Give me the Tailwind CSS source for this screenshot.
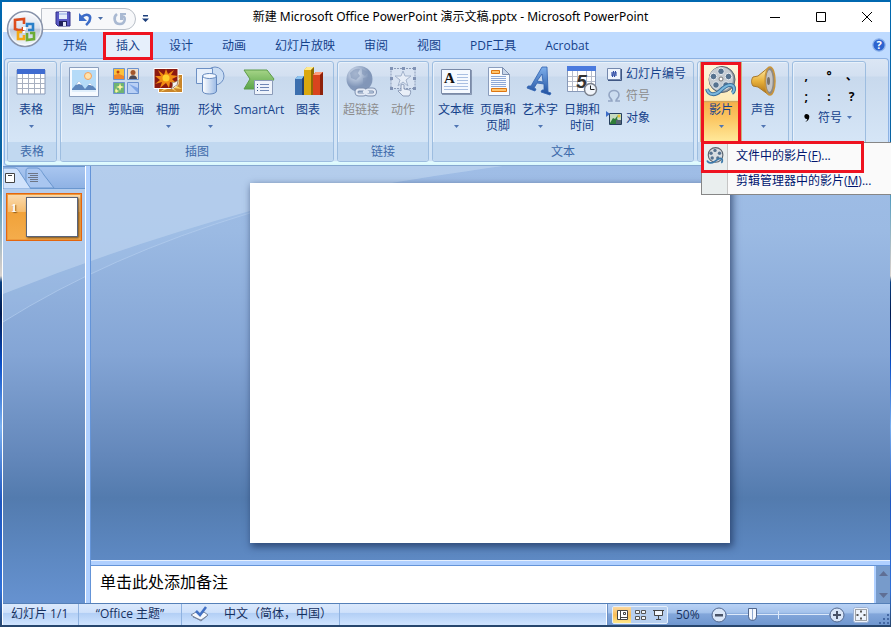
<!DOCTYPE html>
<html lang="zh-CN">
<head>
  <meta charset="UTF-8" />
  <meta name="viewport" content="width=device-width, initial-scale=1.0" />
  <title>新建 Microsoft Office PowerPoint 演示文稿.pptx - Microsoft PowerPoint</title>
  <script src="https://cdn.jsdelivr.net/npm/@tailwindcss/browser@4"></script>
</head>
<body class="h-screen overflow-hidden bg-[linear-gradient(180deg,#0068b0_0%,#0b62a0_26%,#5c9fc0_32%,#c9c9c9_42%,#d8d4d0_44%,#0a3f80_45%,#001a50_50%,#0a4fc8_58%,#7ab0f0_68%,#1e56c0_80%,#2f70d8_94%,#27456b_100%)] pt-[2px] pl-[2px] pr-px pb-[2px] font-['Open_Sans','Noto_Sans_CJK_SC',sans-serif] text-xs leading-4 text-[#15428b]">
  <div class="relative flex h-full flex-col border-l border-white bg-[#bfdbff]">

    <!-- Title bar -->
    <header class="flex h-[30px] shrink-0 items-center bg-white text-black">
      <div class="flex w-[146px] shrink-0 items-center pt-1 pl-[38px]">
        <div class="flex h-[22px] w-[96px] items-center gap-1 rounded-r-full border border-[#b9bfc8] bg-[#f7f8fa] pl-[13px]">
          <button class="mr-[2px]" aria-label="保存"><svg class="size-4" viewBox="0 0 16 16"><path d="M1 1h14v14H3l-2-2z" fill="#5a59c4" stroke="#30308a"/><path d="M4 1h8v7H4z" fill="#e4ecfa"/><path d="M4 2h8v2H4z" fill="#b9c9ee"/><path d="M4 10h8v5H4z" fill="#20205c"/><path d="M8 11h3v4H8z" fill="#dfe6f8"/></svg></button>
          <button aria-label="撤消"><svg class="size-4" viewBox="0 0 16 16"><path d="M5 6c4-4 9-2 8 2 0 3-2 4-4 6" fill="none" stroke="#3c6cc8" stroke-width="2.600"/><path d="M2 2v8h8z" fill="#3c6cc8"/></svg></button>
          <svg class="h-1 w-[7px]" viewBox="0 0 7 4"><path d="M1 0h5L3.500 3z" fill="#4a6ea8"/></svg>
          <button class="ml-1" aria-label="恢复"><svg class="size-4" viewBox="0 0 16 16"><path d="M5 3c-4 3-3 10 3 10 5 0 6-6 3-8" fill="none" stroke="#a9b9d2" stroke-width="2.600"/><path d="M8 2h6v2h-3v5H8z" fill="#a9b9d2"/></svg></button>
        </div>
        <button class="ml-[6px]" aria-label="自定义快速访问工具栏"><svg class="h-2 w-[7px]" viewBox="0 0 7 8"><path d="M1 0h5v1.500H1zM0 3.500h7L3.500 7z" fill="#1c3f7c"/></svg></button>
      </div>
      <h1 class="flex-1 truncate text-center font-['Noto_Sans','Noto_Sans_CJK_SC',sans-serif]">新建 Microsoft Office PowerPoint 演示文稿.pptx - Microsoft PowerPoint</h1>
      <button class="flex w-[46px] justify-center" aria-label="最小化"><svg class="size-3" viewBox="0 0 12 12" stroke="#000"><path d="M1 6.500h10"/></svg></button>
      <button class="flex w-[46px] justify-center" aria-label="最大化"><svg class="size-3" viewBox="0 0 12 12" stroke="#000" fill="none"><path d="M1.500 1.500h9v9h-9z"/></svg></button>
      <button class="flex w-[46px] justify-center" aria-label="关闭"><svg class="size-3" viewBox="0 0 12 12" stroke="#000" fill="none"><path d="M1 1l10 10M11 1L1 11"/></svg></button>
    </header>

    <!-- Office button, hangs over title bar and tabs -->
    <button class="absolute top-2 left-[3px]" aria-label="Office 按钮">
      <svg class="size-[38px]" viewBox="0 0 38 38">
        <defs><linearGradient id="orb" x2="0" y2="1"><stop stop-color="#fbfcfe"/><stop offset=".48" stop-color="#dbe0ec"/><stop offset=".5" stop-color="#bdc6d8"/><stop offset="1" stop-color="#f4fbff"/></linearGradient></defs>
        <circle cx="19" cy="19" r="17.500" fill="url(#orb)" stroke="#8994ab" stroke-width="1.500"/>
        <circle cx="19" cy="19" r="16" fill="none" stroke="#fff" stroke-opacity=".7"/>
        <g fill="none" stroke-width="2.600">
          <path d="M18 14v-5l-9 1v9l3 1h5v-3" stroke="#dc4b1c"/>
          <path d="M21 17v-3h6v6h-5" stroke="#2b7fc9"/>
          <path d="M16 22h-4v7h6v-4" stroke="#f3a712"/>
          <path d="M21 23v7l7-1v-6h-4" stroke="#6dac35"/>
        </g>
        <path d="M17 17h3v3h-3zM17 21h2v2h-2z" fill="#fff"/>
      </svg>
    </button>

    <!-- Tabs -->
    <nav class="flex h-[26px] shrink-0 gap-px pl-[46px]">
      <button class="px-[14px] pt-[2px]">开始</button>
      <button class="relative z-20 mx-px h-[28px] self-start border-3 border-[#ee1320] bg-[#e6effb] px-[10px]">插入</button>
      <button class="px-[14px] pt-[2px]">设计</button>
      <button class="px-[14px] pt-[2px]">动画</button>
      <button class="px-[14px] pt-[2px]">幻灯片放映</button>
      <button class="px-[14px] pt-[2px]">审阅</button>
      <button class="px-[14px] pt-[2px]">视图</button>
      <button class="px-[14px] pt-[2px]">PDF工具</button>
      <button class="px-[14px] pt-[2px]">Acrobat</button>
      <button class="ml-auto pr-1" aria-label="帮助"><svg class="size-[14px]" viewBox="0 0 14 14"><circle cx="7" cy="7" r="6.200" fill="#2c63cf" stroke="#8fb4ea" stroke-width="1.200"/><text x="7" y="11" text-anchor="middle" font-size="11" font-weight="700" fill="#fff">?</text></svg></button>
    </nav>

    <!-- Ribbon -->
    <section class="relative z-10 mx-px flex shrink-0 gap-[3px] rounded-[4px] border border-[#8db2e3] border-b-[#86a8d0] bg-[linear-gradient(180deg,#dbe6f4_0%,#d3e0f1_16%,#c8d9ed_17%,#d5e5f6_76%,#cfe2f6_96%,#e3fdff_97%,#d8f6fc_100%)] px-[2px] pt-[2px] pb-[3px]">

      <div class="rounded-[3px] border border-[#9dbde0] shadow-[inset_1px_1px_0_#e8f1fb]">
        <div class="flex h-[80px] pr-1 pl-[2px]">
          <button class="flex w-[42px] flex-col items-center pt-1">
            <svg class="size-8" viewBox="0 0 32 32"><path d="M2 4h28v24H2z" fill="#fff" stroke="#8899b8"/><path d="M2 3h28v5H2z" fill="#3f6bd0"/><path d="M2 12.500h28M2 17.500h28M2 22.500h28M7.500 8v20M13.500 8v20M19.500 8v20M25.500 8v20" stroke="#a8b0c0"/></svg>
            <span class="mt-1">表格</span>
            <svg class="mt-[7px] h-1 w-[7px]" viewBox="0 0 7 4"><path d="M1 0h5L3.500 3z" fill="#4f75b3"/></svg>
          </button>
        </div>
        <div class="h-[19px] rounded-b-[2px] bg-[#c1d8f0] text-center leading-[19px] text-[#3e6aaa]">表格</div>
      </div>

      <div class="rounded-[3px] border border-[#9dbde0] shadow-[inset_1px_1px_0_#e8f1fb]">
        <div class="flex h-[80px] pr-1 pl-[2px]">
          <button class="flex w-[42px] flex-col items-center pt-1">
            <svg class="size-8" viewBox="0 0 32 32"><path d="M1.500 1.500h29v29h-29z" fill="#f6faff" stroke="#8b9fbe"/><path d="M4 4h24v22H4z" fill="#b5dbf8"/><circle cx="20" cy="10" r="3.500" fill="#ffe2ad" stroke="#f5a15a"/><path d="M4 23l7-8 6 8 5-6 6 6v3H4z" fill="#5e87bd"/><path d="M8 19l3-4 3 4-3-1zM20 19l2-2 3 3-3-1z" fill="#fff"/><path d="M4 24h24v2H4z" fill="#dfeefb"/></svg>
            <span class="mt-1">图片</span>
          </button>
          <button class="flex w-[42px] flex-col items-center pt-1">
            <svg class="size-8" viewBox="0 0 32 32"><path d="M3.500 2.500h11v11h-11z" fill="#fbc13b" stroke="#6d93cf"/><path d="M4 9l5-1 5 2v3H4z" fill="#f0862b"/><circle cx="8" cy="6" r="1.500" fill="#c2410c"/><path d="M17.500 2.500h11v11h-11z" fill="#f0e0cc" stroke="#6d93cf"/><circle cx="23" cy="6.500" r="2.500" fill="#a4572c"/><path d="M19 13c0-5 8-5 8 0z" fill="#4c4a56"/><path d="M3.500 16.500h11v11h-11z" fill="#6fb472" stroke="#6d93cf"/><path d="M10 17l1 3 3 1-3 1-1 3-1-3-3-1 3-1zM6 22l1 2 2 1-2 1-1 1-1-2z" fill="#fff5a0"/><path d="M17.500 16.500h11v11h-11z" fill="#b9d0f5" stroke="#6d93cf"/><path d="M19 18l9 9V22z" fill="#7fa5e6"/></svg>
            <span class="mt-1">剪贴画</span>
          </button>
          <button class="flex w-[42px] flex-col items-center pt-1">
            <svg class="size-8" viewBox="0 0 32 32"><path d="M6.500 8.500h24v18h-24z" fill="#c9852a" stroke="#fff"/><path d="M8 26l10-8-8-1 9-1 10-5-6 8 7 4-9-1 4 4-7-4z" fill="#fbd56a"/><path d="M2 2.500h24v16l-5 4H2z" fill="#8c1a10" stroke="#fff"/><path d="M14 3l2 5 6-4-3 5 7 1-6 3 5 5-7-2-1 6-3-5-6 5 2-6-7 2 5-4-5-4 6 0-3-6 6 5z" fill="#f18b12"/><circle cx="14" cy="12" r="3.500" fill="#ffd12c"/><path d="M26 14l-1 5-6 4c2-3 2-5 1-7 2 1 4 0 6-2z" fill="#f5f5f5" stroke="#8d7450" stroke-width=".6"/></svg>
            <span class="mt-1">相册</span>
            <svg class="mt-[7px] h-1 w-[7px]" viewBox="0 0 7 4"><path d="M1 0h5L3.500 3z" fill="#4f75b3"/></svg>
          </button>
          <button class="flex w-[42px] flex-col items-center pt-1">
            <svg class="size-8" viewBox="0 0 32 32"><defs><linearGradient id="cyl"><stop stop-color="#fff"/><stop offset="1" stop-color="#9cbbe6"/></linearGradient></defs><circle cx="21" cy="10" r="9" fill="#c9dcf3" stroke="#6d90c4"/><path d="M2.500 2.500h16v15h-16z" fill="#e6effb" stroke="#6d90c4"/><path d="M8.500 10v15c0 4 14 4 14 0V10z" fill="url(#cyl)" stroke="#6488bd"/><ellipse cx="15.500" cy="10" rx="7" ry="2.500" fill="#f3f8ff" stroke="#6488bd"/></svg>
            <span class="mt-1">形状</span>
            <svg class="mt-[7px] h-1 w-[7px]" viewBox="0 0 7 4"><path d="M1 0h5L3.500 3z" fill="#4f75b3"/></svg>
          </button>
          <button class="flex w-[56px] flex-col items-center pt-1">
            <svg class="size-8" viewBox="0 0 32 32"><defs><linearGradient id="chev" x2="0" y2="1"><stop stop-color="#a5d487"/><stop offset="1" stop-color="#5aa548"/></linearGradient></defs><path d="M1 4h23l7 9-7 10H1l6-10z" fill="url(#chev)" stroke="#5d9b4a"/><path d="M11.500 14.500h18v14h-18z" fill="#eef3fb" stroke="#8b9bb8"/><path d="M17 18.500h9M17 21.500h9M17 24.500h9" stroke="#6f87b5"/><path d="M14 18.500h1M14 21.500h1M14 24.500h1" stroke="#30508c"/></svg>
            <span class="mt-1">SmartArt</span>
          </button>
          <button class="flex w-[42px] flex-col items-center pt-1">
            <svg class="size-8" viewBox="0 0 32 32"><path d="M3 13l3-3h6v19H3z" fill="#3c6fae"/><path d="M3 13l3-3h6l-2 3z" fill="#8bc3ef"/><path d="M10 13l2-3v19h-2z" fill="#25426f"/><path d="M12 4l3-3h7v28H12z" fill="#dba80e"/><path d="M12 4l3-3h7l-3 3z" fill="#ffe98a"/><path d="M19 4l3-3v28h-3z" fill="#8d6b06"/><path d="M21 9l3-3h7v23H21z" fill="#d9441e"/><path d="M21 9l3-3h7l-3 3z" fill="#ff9c7a"/><path d="M28 9l3-3v23h-3z" fill="#8e210b"/></svg>
            <span class="mt-1">图表</span>
          </button>
        </div>
        <div class="h-[19px] rounded-b-[2px] bg-[#c1d8f0] text-center leading-[19px] text-[#3e6aaa]">插图</div>
      </div>

      <div class="rounded-[3px] border border-[#9dbde0] shadow-[inset_1px_1px_0_#e8f1fb]">
        <div class="flex h-[80px] pr-1 pl-[2px] text-[#8d8d8d]">
          <button class="flex w-[42px] flex-col items-center pt-1" disabled>
            <svg class="size-8" viewBox="0 0 32 32"><defs><radialGradient id="globe" cx=".35" cy=".3"><stop stop-color="#dbe5f3"/><stop offset="1" stop-color="#8297b9"/></radialGradient></defs><circle cx="14.500" cy="13" r="13" fill="url(#globe)"/><path d="M5 7c3-4 7-5 10-4l-2 4 2 3-4 4-5-2zM17 3l6 3-3 4-3-2zM18 12l6-1 2 4-5 6-3-4z" fill="#8296b8" opacity=".6"/><g fill="none" stroke="#7d8fae" stroke-width="4"><rect x="11.500" y="23.500" width="9" height="5" rx="2.500"/><rect x="21" y="23.500" width="9" height="5" rx="2.500"/></g><g fill="none" stroke="#e3eaf5" stroke-width="2"><rect x="11.500" y="23.500" width="9" height="5" rx="2.500"/><rect x="21" y="23.500" width="9" height="5" rx="2.500"/><path d="M18 26h6"/></g></svg>
            <span class="mt-1">超链接</span>
          </button>
          <button class="flex w-[42px] flex-col items-center pt-1" disabled>
            <svg class="size-8" viewBox="0 0 32 32"><path d="M4 2.500h24v20H4z" fill="#d8e3f2" stroke="#8b9bb8" stroke-dasharray="2 1"/><path d="M16 5l2 5h6l-5 4 2 6-5-4-5 4 2-6-5-4h6z" fill="#e6edf7" stroke="#a3b3cc"/><path d="M3 1h3v3H3zM15 1h3v3h-3zM26 1h3v3h-3zM3 11h3v3H3zM26 11h3v3h-3zM3 21h3v3H3zM26 21h3v3h-3z" fill="#8193b5"/><path d="M14 19c1-1 3-1 3 0v4l6 1c1 1 1 4-1 6h-6l-5-5c0-1 2-1 3 0z" fill="#e9eff8" stroke="#8b9bb8"/></svg>
            <span class="mt-1">动作</span>
          </button>
        </div>
        <div class="h-[19px] rounded-b-[2px] bg-[#c1d8f0] text-center leading-[19px] text-[#3e6aaa]">链接</div>
      </div>

      <div class="rounded-[3px] border border-[#9dbde0] shadow-[inset_1px_1px_0_#e8f1fb]">
        <div class="flex h-[80px] pr-1 pl-[2px]">
          <button class="flex w-[42px] flex-col items-center pt-1">
            <svg class="size-8" viewBox="0 0 32 32"><path d="M1.500 3.500h29v24h-29z" fill="#f5f9ff" stroke="#7a8aa8"/><path d="M2 28.500h29.500V4" fill="none" stroke="#5b6b8a" opacity=".6"/><text x="4" y="17" font-family="Liberation Serif" font-size="15" font-weight="700" fill="#111">A</text><path d="M17 8.500h11M17 11.500h11M17 14.500h11M17 17.500h11M4 20.500h24M4 23.500h24" stroke="#a9bfe2"/></svg>
            <span class="mt-1">文本框</span>
            <svg class="mt-[7px] h-1 w-[7px]" viewBox="0 0 7 4"><path d="M1 0h5L3.500 3z" fill="#4f75b3"/></svg>
          </button>
          <button class="flex w-[42px] flex-col items-center pt-1">
            <svg class="size-8" viewBox="0 0 32 32"><path d="M6.500 1.500h14l7 7v21h-21z" fill="#f8fbff" stroke="#8a9dbd"/><path d="M20.500 1.500l7 7h-7z" fill="#c8d6ea" stroke="#7c8fb0"/><path d="M9.500 4.500h8v3h-8zM9.500 22.500h15v3h-15z" fill="#ffc56e" stroke="#dd7613"/><path d="M9 10.500h15M9 12.500h15M9 14.500h15M9 16.500h15M9 18.500h15M9 20.500h15" stroke="#8ea9d8"/></svg>
            <span class="mt-1">页眉和<br>页脚</span>
          </button>
          <button class="flex w-[42px] flex-col items-center pt-1">
            <svg class="size-8" viewBox="0 0 32 32"><defs><linearGradient id="art" x2="0" y2="1"><stop stop-color="#7fb0ec"/><stop offset="1" stop-color="#1f4f9e"/></linearGradient></defs><path d="M18 1h5l1 25 3 1-1 2-9-3 1-2 2 0v-6l-7-1-3 5 2 1-1 2-8-3 1-2 3 0zM18 8l-5 7 6 1z" fill="url(#art)" fill-rule="evenodd" stroke="#2d5fae" stroke-width=".8"/></svg>
            <span class="mt-1">艺术字</span>
            <svg class="mt-[7px] h-1 w-[7px]" viewBox="0 0 7 4"><path d="M1 0h5L3.500 3z" fill="#4f75b3"/></svg>
          </button>
          <button class="flex w-[42px] flex-col items-center pt-1">
            <svg class="size-8" viewBox="0 0 32 32"><path d="M1.500 1.500h28v24h-28z" fill="#fff" stroke="#8899b8"/><path d="M1 0h29v5H1z" fill="#4a7ade"/><path d="M2 10.500h27M2 15.500h27M2 20.500h27M6.500 5v20M11.500 5v20M20.500 5v20M25.500 5v20" stroke="#b6bccb"/><text x="15.500" y="22" text-anchor="middle" font-family="Liberation Sans" font-size="19" font-style="italic" font-weight="700" fill="#333">5</text><circle cx="24.500" cy="23.500" r="6" fill="#f1f5fb" stroke="#7a808c" stroke-width="1.500"/><path d="M24.500 19.500v4h4" fill="none" stroke="#222"/></svg>
            <span class="mt-1">日期和<br>时间</span>
          </button>
          <div class="flex w-[86px] flex-col pt-px pl-[3px] whitespace-nowrap">
            <button class="flex h-[22px] items-center gap-1">
              <svg class="size-4" viewBox="0 0 16 16"><path d="M1.500 2.500h13v11h-13z" fill="#eef4fd" stroke="#7488ad"/><path d="M15.500 3v11.500H2" stroke="#3e5683" fill="none"/><path d="M7.500 5L6.500 11M9.500 5l-1 6M5 7h6M5 9h6" stroke="#1a3a9c"/></svg>
              幻灯片编号
            </button>
            <button class="flex h-[22px] items-center gap-1 text-[#8d8d8d]" disabled>
              <svg class="size-4" viewBox="0 0 16 16"><path d="M2 13h4c0-2-3-3-3-6 0-6 10-6 10 0 0 3-3 4-3 6h4" fill="none" stroke="#93a5c3" stroke-width="1.600"/></svg>
              符号
            </button>
            <button class="flex h-[22px] items-center gap-1">
              <svg class="size-4" viewBox="0 0 16 16"><path d="M3.500 3.500h12v11h-12z" fill="#c6dcc0" stroke="#26405e"/><path d="M4 13l3-5 2 1 3-4-1 4 4 4v1H4z" fill="#2f7d38"/><circle cx="13" cy="6" r="1.500" fill="#e6c43a"/><path d="M10 10h5v4h-5z" fill="#586474"/><path d="M0 1l4 3-4 3z" fill="#3c6cc8"/></svg>
              对象
            </button>
          </div>
        </div>
        <div class="h-[19px] rounded-b-[2px] bg-[#c1d8f0] text-center leading-[19px] text-[#3e6aaa]">文本</div>
      </div>

      <div class="rounded-[3px] border border-[#9dbde0] shadow-[inset_1px_1px_0_#e8f1fb]">
        <div class="flex h-[80px] pr-1 pl-[2px]">
          <div class="relative">
            <button class="flex h-full w-[42px] flex-col items-center border-x border-[#c9b07a] bg-[linear-gradient(180deg,#fdf6e0_0%,#fdebb8_48%,#c9a560_49%,#f6b04c_51%,#fbc560_70%,#ffea9c_100%)] pt-1" aria-haspopup="menu" aria-expanded="true">
              <svg class="size-8" viewBox="0 0 32 32"><circle cx="17" cy="13.500" r="13" fill="#8d969f" stroke="#5c656f"/><circle cx="16" cy="13" r="12" fill="#c6ccd2"/><g fill="#56728f" stroke="#e8ecf0"><circle cx="16" cy="5.300" r="3.300"/><circle cx="23.500" cy="10.500" r="3.300"/><circle cx="21" cy="19" r="3.300"/><circle cx="11" cy="19" r="3.300"/><circle cx="8.500" cy="10.500" r="3.300"/></g><circle cx="16" cy="13" r="2" fill="#fff" stroke="#777"/><path d="M2 23c2 7 9 6 13 2s9-8 13-5c2 2 1 6-1 7" fill="none" stroke="#386f9c" stroke-width="4"/><path d="M2 23c2 7 9 6 13 2s9-8 13-5c2 2 1 6-1 7" fill="none" stroke="#7cb8dc" stroke-width="2"/></svg>
              <span class="mt-1">影片</span>
              <svg class="mt-[7px] h-1 w-[7px]" viewBox="0 0 7 4"><path d="M1 0h5L3.500 3z" fill="#4f75b3"/></svg>
            </button>
            <!-- Movie menu -->
            <div class="absolute top-full left-px z-20 w-[200px] border border-[#868686] bg-[linear-gradient(90deg,#e9eeee_25px,#c5c5c5_25px,#c5c5c5_26px,#fafafa_26px)] pb-px whitespace-nowrap text-[#00156e]" role="menu">
              <button class="flex h-[26px] w-full items-center gap-3 pl-1" role="menuitem">
                <svg class="size-[18px]" viewBox="0 0 32 32"><circle cx="17" cy="14" r="13" fill="#d8dde2" stroke="#5c656f" stroke-width="2"/><g fill="#56728f"><circle cx="16" cy="6" r="3"/><circle cx="24" cy="11" r="3"/><circle cx="21" cy="19.500" r="3"/><circle cx="11" cy="19.500" r="3"/><circle cx="9" cy="11" r="3"/></g><path d="M2 24c2 6 9 5 13 2s9-8 13-5c2 2 1 6-1 7" fill="none" stroke="#3a79aa" stroke-width="3"/></svg>
                <span>文件中的影片(<u>F</u>)...</span>
              </button>
              <button class="block h-6 pl-[34px]" role="menuitem">剪辑管理器中的影片(<u>M</u>)...</button>
            </div>
            <div class="pointer-events-none absolute top-0 left-px z-30 h-[82px] w-10 border-3 border-[#ee1320]"></div>
            <div class="pointer-events-none absolute top-[79px] left-px z-30 h-8 w-[163px] border-3 border-[#ee1320]"></div>
          </div>
          <button class="flex w-[42px] flex-col items-center pt-1">
            <svg class="size-8" viewBox="0 0 32 32"><defs><linearGradient id="cone" x2="0" y2="1"><stop stop-color="#fff0b0"/><stop offset=".5" stop-color="#e9b23c"/><stop offset="1" stop-color="#a8690f"/></linearGradient></defs><path d="M6 11l5-1L22 1v28l-11-8-5-1c-2-3-2-6 0-9z" fill="url(#cone)" stroke="#a9782a"/><ellipse cx="23" cy="15" rx="5" ry="14" fill="#8f8a82" stroke="#c9953b" stroke-width="1.500"/><ellipse cx="22.500" cy="15" rx="3.200" ry="11" fill="#c4c4c6"/><ellipse cx="21.500" cy="15" rx="1.500" ry="4" fill="#77716a"/></svg>
            <span class="mt-1">声音</span>
            <svg class="mt-[7px] h-1 w-[7px]" viewBox="0 0 7 4"><path d="M1 0h5L3.500 3z" fill="#4f75b3"/></svg>
          </button>
        </div>
        <div class="h-[19px] rounded-b-[2px] bg-[#c1d8f0]"></div>
      </div>

      <div class="rounded-[3px] border border-[#9dbde0] shadow-[inset_1px_1px_0_#e8f1fb]">
        <div class="h-[80px] w-[72px] px-[2px] pt-[3px]">
          <div class="grid grid-cols-3 text-center leading-[21px] font-bold text-black">
            <button>,</button><button>°</button><button>、</button>
            <button>;</button><button>:</button><button>?</button>
          </div>
          <button class="flex h-[21px] items-center gap-1 pl-2">
            <svg class="h-3 w-[7px]" viewBox="0 0 7 12"><path d="M3.500 2a2.500 2.500 0 1 0 .8 5c-.3 1.500-1 2-2 3 3-1 4-3 4-5.500C6.300 3 5 2 3.500 2z" fill="#000"/></svg>
            <span class="pl-1">符号</span>
            <svg class="h-1 w-[7px]" viewBox="0 0 7 4"><path d="M1 0h5L3.500 3z" fill="#4f75b3"/></svg>
          </button>
        </div>
        <div class="h-[19px] rounded-b-[2px] bg-[#c1d8f0]"></div>
      </div>
    </section>

    <!-- Workspace -->
    <main class="relative flex min-h-0 flex-1 bg-[linear-gradient(180deg,#9fbde6_0%,#9bbae3_15%,#84a5d5_43%,#6488bb_66%,#537bae_76%,#5c87c0_88%,#6692d0_100%)]">
      <svg class="absolute top-0 left-0 h-[160px] w-[500px]" viewBox="0 0 500 160">
        <path d="M0 0H500C400 14 320 28 247 47Q105 90 0 156z" fill="#aac6ea" opacity=".3"/>
        <path d="M0 0H500C400 14 320 28 247 45Q120 80 0 128z" fill="#bfd6f0" opacity=".6"/>
        <path d="M247 47Q105 90 0 156" fill="none" stroke="#b4cdee" stroke-opacity=".7"/>
      </svg>

      <aside class="relative w-[82px] shrink-0">
        <div class="flex h-[23px] border-y border-[#6a97cf] bg-[linear-gradient(180deg,#a9c6f0,#8fb2e4)]">
          <svg class="h-[22px] w-[60px]" viewBox="0 0 60 22">
            <path d="M23 21V4c0-2 1-3 3-3h8c3 0 5 4 7 7l10 13z" fill="#a9c6f0" stroke="#6a97cf"/>
            <path d="M0 22V1h11c4 0 5 3 7 6l10 15z" fill="#d0e2fb" stroke="#6a97cf"/>
            <path d="M2.500 6.500h9v9h-9z" fill="#fff" stroke="#444"/><path d="M5 8.500h4" stroke="#444"/>
            <path d="M25 6.500h10M27 8.500h8M25 10.500h10M27 12.500h8M27 14.500h8" stroke="#6d7686"/>
          </svg>
        </div>
        <button class="mt-1 ml-[3px] flex h-12 w-[76px] border border-[#e4660f] bg-[linear-gradient(180deg,#fbdcb0_0%,#f6bd70_38%,#f1a23a_40%,#f4ad4c_100%)] pt-[3px] pl-1 shadow-[inset_0_0_0_1px_#ee9a3c]">
          <span class="w-[15px] pt-[3px] text-left font-['Liberation_Serif',serif] font-bold text-white [text-shadow:1px_1px_1px_#8a5a20]">1</span>
          <span class="h-10 w-[52px] border border-[#5a6478] bg-white shadow-[1px_1px_2px_#6b4a20]"></span>
        </button>
      </aside>

      <div class="relative w-[6px] shrink-0 border-r border-l border-l-white border-r-[#6494d8] bg-[#b0d0ff]"></div>

      <div class="relative flex min-w-0 flex-1 flex-col">
        <div class="flex flex-1 items-center justify-center pr-[2px]">
          <div class="h-[360px] w-[480px] bg-white shadow-[2px_3px_7px_1px_rgba(25,45,85,0.65)]"></div>
        </div>
        <div class="h-[6px] shrink-0 border-y border-t-[#e4efff] border-b-[#6494d8] bg-[#b0d0ff]"></div>
        <div class="flex h-[37px] shrink-0 bg-white">
          <input class="min-w-0 flex-1 pb-[5px] pl-[9px] text-base text-black outline-none placeholder:text-black placeholder:opacity-100" aria-label="备注" placeholder="单击此处添加备注" />
          <div class="flex w-4 flex-col items-center justify-between border-l-2 border-[#b0d0ff] bg-[#779bcb] py-[5px]">
            <svg class="h-[5px] w-[9px]" viewBox="0 0 9 5"><path d="M4.500 0L9 5H0z" fill="#5f6f95"/></svg>
            <svg class="h-[5px] w-[9px]" viewBox="0 0 9 5"><path d="M0 0h9L4.500 5z" fill="#5f6f95"/></svg>
          </div>
        </div>
      </div>
    </main>

    <!-- Status bar -->
    <footer class="flex h-[22px] shrink-0 items-stretch border-t border-[#5580b8] bg-[linear-gradient(180deg,#dbe9fc_0%,#cfe1fb_40%,#b3cff5_45%,#d0e4ff_100%)] leading-[20px] whitespace-nowrap text-[#15305f]">
      <div class="w-[76px] border-r border-[#8fb2e0] pl-2">幻灯片 1/1</div>
      <div class="w-[103px] border-r border-[#8fb2e0] text-center">“Office 主题”</div>
      <div class="flex w-[158px] border-r border-[#8fb2e0] pl-[9px]">
        <svg class="mt-[2px] mr-4 h-4 w-[17px]" viewBox="0 0 17 16"><path d="M0 9l5-3 4 2 4-2 4 3-7 6z" fill="#f5f8fd" stroke="#75839c"/><path d="M2 11l8 3 6-4" fill="none" stroke="#75839c"/><path d="M5 5l4 4 6-8" fill="none" stroke="#4371c4" stroke-width="2.500"/></svg>
        <span>中文（简体，中国）</span>
      </div>
      <div class="flex-1 border-r border-white"></div>
      <div class="flex w-[283px] items-center border-l border-[#6b8fc4] bg-[linear-gradient(180deg,#b9d2f5_0%,#a5c3ec_40%,#82a6da_48%,#7097cf_100%)] pl-1">
        <div class="flex h-[18px] overflow-hidden rounded-[2px] border border-[#e4effc] bg-[#b7cfef]">
          <button class="flex w-[18px] items-center justify-center bg-[linear-gradient(180deg,#fbd8a0,#f9bd58_50%,#ffe88a)]" aria-label="普通视图"><svg class="h-3 w-[13px]" viewBox="0 0 13 12"><path d="M1.500 1.500h10v9h-10z" fill="#fff" stroke="#444"/><path d="M4.500 1v10M7.500 3.500h2v2h-2zM5 8.500h6" stroke="#444" fill="none"/></svg></button>
          <button class="flex w-[18px] items-center justify-center" aria-label="幻灯片浏览"><svg class="h-3 w-[13px]" viewBox="0 0 13 12"><path d="M1.500 1.500h4v3h-4zM7.500 1.500h4v3h-4zM1.500 7.500h4v3h-4zM7.500 7.500h4v3h-4z" fill="#f2f6fc" stroke="#555"/></svg></button>
          <button class="flex w-[18px] items-center justify-center" aria-label="幻灯片放映"><svg class="h-3 w-[13px]" viewBox="0 0 13 12"><path d="M3 2h7v4H3z" fill="#f2f6fc"/><path d="M1 1.500h11M2.500 2v4.500h8V2M6.500 7v3M4 10.500h5" fill="none" stroke="#444"/></svg></button>
        </div>
        <button class="ml-2 w-[27px] text-left">50%</button>
        <button class="ml-2" aria-label="缩小"><svg class="size-4" viewBox="0 0 16 16"><circle cx="8" cy="8" r="7" fill="#d9e6f8" stroke="#51678e"/><path d="M4 7h8v2.500H4z" fill="#4a5468"/></svg></button>
        <div class="flex w-[102px] items-center bg-[linear-gradient(90deg,transparent_51px,#dce9fa_51px,#dce9fa_52px,transparent_52px)] bg-size-[100%_8px] bg-center bg-no-repeat">
          <input type="range" min="0" max="100" value="23" aria-label="显示比例" class="h-[14px] w-full appearance-none bg-[linear-gradient(#dce9fa,#dce9fa)] bg-size-[100%_1px] bg-center bg-no-repeat [&::-webkit-slider-thumb]:h-[13px] [&::-webkit-slider-thumb]:w-[9px] [&::-webkit-slider-thumb]:appearance-none [&::-webkit-slider-thumb]:rounded-b-[5px] [&::-webkit-slider-thumb]:border [&::-webkit-slider-thumb]:border-[#51678e] [&::-webkit-slider-thumb]:bg-[linear-gradient(90deg,#f4f8fe_3px,#8fa8cf_3px,#8fa8cf_4px,#f4f8fe_4px)]" />
        </div>
        <button aria-label="放大"><svg class="size-4" viewBox="0 0 16 16"><circle cx="8" cy="8" r="7" fill="#d9e6f8" stroke="#51678e"/><path d="M4 7h3V4h2v3h3v2H9v3H7V9H4z" fill="#4a5468"/></svg></button>
        <button class="ml-2" aria-label="使幻灯片适应当前窗口"><svg class="size-4" viewBox="0 0 16 16"><rect x=".5" y=".5" width="15" height="15" rx="2" fill="#edf3fc" stroke="#9db2d4"/><path d="M2.500 2.500h11v11h-11z" fill="none" stroke="#555" stroke-dasharray="1 1"/><path d="M8 3v3M8 10v3M3 8h3M10 8h3M7 4.500h2M7 11.500h2M4.500 7v2M11.500 7v2" stroke="#555"/></svg></button>
        <svg class="mt-auto ml-auto size-3" viewBox="0 0 12 12"><path d="M9 1h2v2H9zM5 5h2v2H5zM9 5h2v2H9zM1 9h2v2H1zM5 9h2v2H5zM9 9h2v2H9z" fill="#4468a3"/></svg>
      </div>
    </footer>
  </div>
</body>
</html>
